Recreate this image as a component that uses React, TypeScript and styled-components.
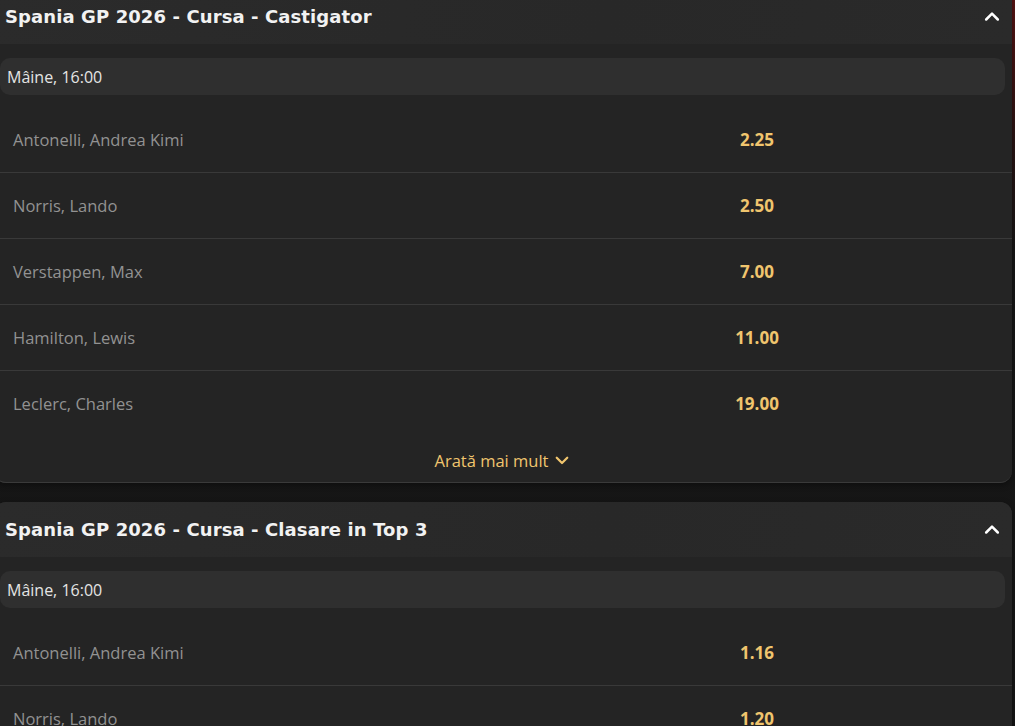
import React from "react";
import styled, { createGlobalStyle } from "styled-components";

const Global = createGlobalStyle`
  html, body { margin: 0; padding: 0; background: #151515; overflow: hidden; }
  body { font-family: "Open Sans", "DejaVu Sans", sans-serif; }
`;

const Page = styled.div`
  width: 1015px;
  height: 726px;
  overflow: hidden;
  background: linear-gradient(to bottom, #5a1414 0px, #2a1414 140px, #161616 260px, #151515 100%);
`;

const Column = styled.div`
  display: flex;
  flex-direction: column;
  gap: 19px;
  width: 1018px;
  margin: -11px 0 0 -6px;
`;

const Card = styled.section`
  background: #242424;
  border-radius: 12px;
  overflow: hidden;
  border-bottom: 1px solid #3a3a3a;
  box-shadow: 0 2px 6px rgba(0, 0, 0, 0.4);
`;

const Header = styled.div`
  height: 55px;
  display: flex;
  align-items: center;
  justify-content: space-between;
  padding: 0 10px 0 11px;
  background: linear-gradient(100deg, #2b2b2b 0%, #282828 60%, #2a2a2a 100%);
`;

const Title = styled.h2`
  margin: 0;
  font-family: "DejaVu Sans", "Open Sans", sans-serif;
  font-weight: 700;
  font-size: 18px;
  letter-spacing: 0.1px;
  color: #f2f2f2;
`;

const Body = styled.div`
  padding: 14px 7px 0 6px;
`;

const DateBar = styled.div`
  height: 37px;
  display: flex;
  align-items: center;
  padding: 0 7px;
  border-radius: 10px;
  background: #2f2f2f;
  color: #e4e4e4;
  font-size: 16px;
`;

const Rows = styled.div`
  margin: 11px -7px 0 -6px;
`;

const Row = styled.div`
  height: 66px;
  display: grid;
  grid-template-columns: 1fr 120px 195px;
  align-items: center;
  padding-left: 19px;
  & + & { border-top: 1px solid #393939; height: 65px; }
`;

const Name = styled.span`
  color: #929292;
  font-size: 16.5px;
`;

const Odd = styled.span`
  text-align: center;
  color: #f0c56e;
  font-size: 17px;
  font-weight: 700;
`;

const More = styled.button`
  display: flex;
  align-items: center;
  justify-content: center;
  gap: 4px;
  width: 100%;
  height: 46px;
  padding: 2px 0 0 0;
  background: none;
  border: none;
  color: #f0c56e;
  font-family: "Open Sans", sans-serif;
  font-size: 16.5px;
  cursor: pointer;
`;

const Chevron = ({ up, color, size }: { up?: boolean; color: string; size: number }) => (
  <svg width={size} height={size} viewBox="0 0 24 24" fill="none" stroke={color} strokeWidth={3} strokeLinecap="round" strokeLinejoin="round">
    {up ? <path d="M5 15l7-7 7 7" /> : <path d="M5 9l7 7 7-7" />}
  </svg>
);

type Market = { title: string; rows: [string, string][]; more?: boolean };

const markets: Market[] = [
  {
    title: "Spania GP 2026 - Cursa - Castigator",
    rows: [
      ["Antonelli, Andrea Kimi", "2.25"],
      ["Norris, Lando", "2.50"],
      ["Verstappen, Max", "7.00"],
      ["Hamilton, Lewis", "11.00"],
      ["Leclerc, Charles", "19.00"],
    ],
    more: true,
  },
  {
    title: "Spania GP 2026 - Cursa - Clasare in Top 3",
    rows: [
      ["Antonelli, Andrea Kimi", "1.16"],
      ["Norris, Lando", "1.20"],
      ["Verstappen, Max", "1.70"],
    ],
  },
];

export default function App() {
  return (
    <Page>
      <Global />
      <Column>
        {markets.map((m) => (
          <Card key={m.title}>
            <Header>
              <Title>{m.title}</Title>
              <Chevron up color="#ffffff" size={20} />
            </Header>
            <Body>
              <DateBar>Mâine, 16:00</DateBar>
              <Rows>
                {m.rows.map(([n, o]) => (
                  <Row key={n}>
                    <Name>{n}</Name>
                    <Odd>{o}</Odd>
                    <span />
                  </Row>
                ))}
              </Rows>
              {m.more && (
                <More>
                  Arată mai mult <Chevron color="#f0c56e" size={18} />
                </More>
              )}
            </Body>
          </Card>
        ))}
      </Column>
    </Page>
  );
}
